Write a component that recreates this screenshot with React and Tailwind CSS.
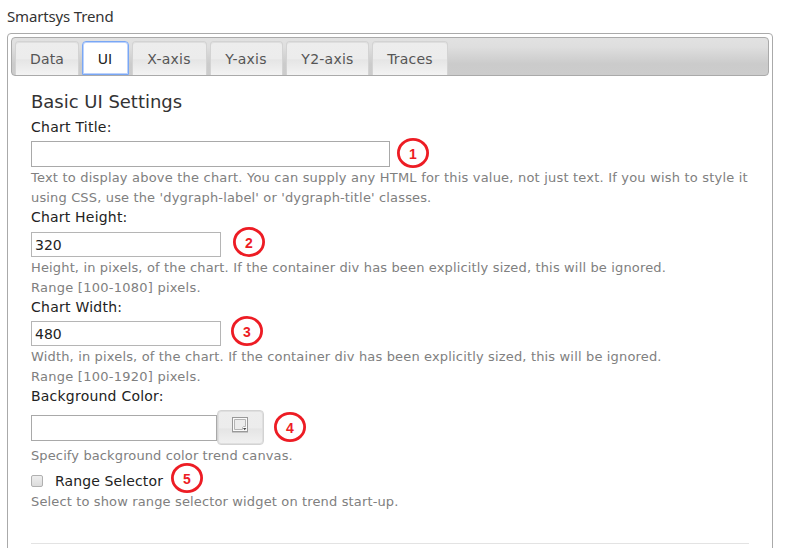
const tabs = [
  { label: 'Data', box: 'w-[64px]', text: 'tracking-[0.1px]' },
  { label: 'UI', box: 'w-[47px]', text: 'pr-[1px]', active: true },
  { label: 'X-axis', box: 'w-[75px]', text: 'tracking-[0.25px] pr-[1px]' },
  { label: 'Y-axis', box: 'w-[73px]', text: 'tracking-[0.25px] pr-[1px]' },
  { label: 'Y2-axis', box: 'w-[83px]', text: 'tracking-[0.25px]' },
  { label: 'Traces', box: 'w-[76px]', text: 'tracking-[0.2px]' },
];

function Tab({ label, box, text, active }) {
  const look = active
    ? 'border-[#79a7f5] border-b bg-white text-[#222] shadow-[inset_0_0_0_1px_#bcd2fb]'
    : 'border-[#d3d3d3] border-b-0 bg-[linear-gradient(#ededed_0%,#ececec_50%,#e5e5e5_54%,#f3f3f3_100%)] text-[#555] shadow-[inset_0_1px_0_#dedede]';
  return (
    <div className={`h-[34px] shrink-0 rounded-t-[4px] border text-center text-[14px] leading-[34px] whitespace-nowrap ${box} ${text} ${look}`}>
      {label}
    </div>
  );
}

function Badge({ n, place }) {
  return (
    <svg className={`absolute h-[30px] w-[32px] ${place}`} viewBox="0 0 32 30">
      <ellipse cx="16" cy="15" rx="14.6" ry="13.6" fill="none" stroke="#ed1c24" strokeWidth="2.8" />
      <text x="16" y="20.5" textAnchor="middle" fontFamily="Liberation Sans, sans-serif" fontWeight="700" fontSize="14" fill="#ed1c24">
        {n}
      </text>
    </svg>
  );
}

function Label({ children, className = 'tracking-[0.25px]' }) {
  return <div className={`h-5 text-[14px] leading-5 whitespace-nowrap text-[#222] ${className}`}>{children}</div>;
}

function Help({ children, className = 'tracking-[0.16px]' }) {
  return <div className={`h-5 text-[13px] leading-5 whitespace-nowrap text-[#808080] ${className}`}>{children}</div>;
}

function PickerIcon() {
  return (
    <svg className="h-4 w-4" viewBox="0 0 16 16" fill="none">
      <rect x="0.5" y="0.5" width="15" height="14" fill="#fafafa" stroke="#999" />
      <path d="M2.5 2.5H13.5V9.5H11.5L10.5 10.5V12.5H2.5Z" fill="#ececec" stroke="#b5b5b5" />
      <path d="M11 11H14.4L12.7 13.2Z" fill="#444" />
      <path d="M0 15.5H16" stroke="#c4c4c4" />
    </svg>
  );
}

export default function App() {
  return (
    <div className="h-[548px] w-[792px] overflow-hidden bg-white font-['DejaVu_Sans',sans-serif]">
      <h1 className="h-[33px] pl-[7px] pt-[5px] font-['Noto_Sans',sans-serif] text-[15px] leading-[22px] tracking-[-0.15px] text-[#333]">Smartsys Trend</h1>
      <main className="ml-[7px] h-[540px] w-[766px] rounded-[4px] border border-[#aaa] p-[3px]">
        <nav className="flex h-[39px] w-[758px] gap-[3px] rounded-[4px] border border-[#aaa] bg-[linear-gradient(#e2e2e2_0%,#dedede_25%,#cbcbcb_70%,#cccccc_100%)] pl-[3px] pt-[3px]">
          {tabs.map((t) => (
            <Tab key={t.label} {...t} />
          ))}
        </nav>
        <section className="flex w-[738px] flex-col pl-5 pt-[15px]">
          <h2 className="h-[26px] text-[18px] leading-[22px] tracking-[-0.02px] text-[#333]">Basic UI Settings</h2>
          <Label>Chart Title:</Label>
          <div className="relative mt-1 h-[26px]">
            <input className="block h-[26px] w-[359px] border border-[#a9a9a9] bg-white" />
            <Badge n="1" place="left-[366px] top-[-3px]" />
          </div>
          <Help className="mt-[1px] tracking-[0.2px]">Text to display above the chart. You can supply any HTML for this value, not just text. If you wish to style it</Help>
          <Help className="tracking-[0.15px]">using CSS, use the &apos;dygraph-label&apos; or &apos;dygraph-title&apos; classes.</Help>
          <Label className="-mt-[1px] tracking-[0.2px]">Chart Height:</Label>
          <div className="relative mt-[5px] h-[25px]">
            <input className="block h-[25px] w-[190px] border border-[#b5b5b5] bg-white pl-[3px] text-[14px] text-[#222]" defaultValue="320" />
            <Badge n="2" place="left-[202px] top-[-5px]" />
          </div>
          <Help className="mt-[1px] tracking-[0.15px]">Height, in pixels, of the chart. If the container div has been explicitly sized, this will be ignored.</Help>
          <Help className="tracking-[0.25px]">Range [100-1080] pixels.</Help>
          <Label className="-mt-[1px] tracking-[0.25px]">Chart Width:</Label>
          <div className="relative mt-1 h-[25px]">
            <input className="block h-[25px] w-[190px] border border-[#b5b5b5] bg-white pl-[3px] text-[14px] text-[#222]" defaultValue="480" />
            <Badge n="3" place="left-[200px] top-[-5px]" />
          </div>
          <Help className="mt-[1px] tracking-[0.16px]">Width, in pixels, of the chart. If the container div has been explicitly sized, this will be ignored.</Help>
          <Help className="tracking-[0.25px]">Range [100-1920] pixels.</Help>
          <Label className="-mt-[1px] tracking-[0.22px]">Background Color:</Label>
          <div className="relative mt-1 flex h-[35px] items-center">
            <input className="mt-[1px] h-[26px] w-[186px] border border-[#a9a9a9] bg-white" />
            <button className="flex h-[35px] w-[47px] justify-center rounded-[4px] border border-[#d3d3d3] bg-[linear-gradient(#ededed_0%,#ececec_50%,#e5e5e5_55%,#f1f1f1_100%)] pt-[6px] pr-[1px] shadow-[inset_0_0_0_1px_#dfdfdf]">
              <PickerIcon />
            </button>
            <Badge n="4" place="left-[243px] top-[2px]" />
          </div>
          <Help className="mt-[1px] tracking-[0.12px]">Specify background color trend canvas.</Help>
          <div className="relative mt-[5px] flex h-5 items-center">
            <span className="h-3 w-3 rounded-[2px] border border-[#b0b0b0] bg-[linear-gradient(#eee,#dcdcdc)]" />
            <Label className="ml-3 tracking-[0.12px]">Range Selector</Label>
            <Badge n="5" place="left-[140px] top-[-8px]" />
          </div>
          <Help className="mt-[1px] tracking-[0.14px]">Select to show range selector widget on trend start-up.</Help>
          <hr className="mt-[31px] w-[718px] border-[#e3e3e3]" />
        </section>
      </main>
    </div>
  );
}
